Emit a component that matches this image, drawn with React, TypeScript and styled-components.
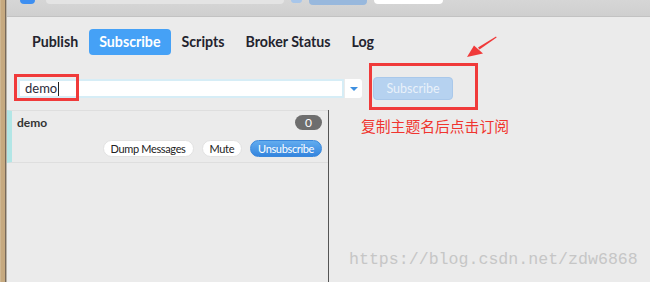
import React from 'react';
import styled, { createGlobalStyle } from 'styled-components';

const GlobalStyle = createGlobalStyle`
  html, body {
    margin: 0;
    padding: 0;
    background: #ebebeb;
  }
  * {
    box-sizing: border-box;
  }
`;

const Page = styled.div`
  position: relative;
  display: flex;
  width: 650px;
  height: 282px;
  overflow: hidden;
  background: #ebebeb;
  font-family: Lato, 'Noto Sans', sans-serif;
`;

const EdgeStrip = styled.div`
  width: 7px;
  flex-shrink: 0;
  background: linear-gradient(to right, #d8c4a2 0, #c6a97f 1px, #c6a97f 5px, #77695a 5px, #77695a 6px, #b9b2a6 6px);
`;

const Main = styled.div`
  flex: 1;
  display: flex;
  flex-direction: column;
`;

const TopBar = styled.div`
  height: 17px;
  display: flex;
  align-items: flex-start;
  background: linear-gradient(#d6d6d6, #cfcfcf);
  border-bottom: 1px solid #c2c2c2;
`;

const TopStub = styled.div<{ $left: number; $w: number; $h: number; $bg: string }>`
  margin-left: ${(p) => p.$left}px;
  width: ${(p) => p.$w}px;
  height: ${(p) => p.$h}px;
  background: ${(p) => p.$bg};
  border-radius: 0 0 4px 4px;
`;

const Tabs = styled.nav`
  display: flex;
  gap: 1px;
  padding: 12px 0 0 15px;
`;

const Tab = styled.div<{ $active?: boolean }>`
  height: 26px;
  line-height: 26px;
  padding: 0 10px;
  border-radius: 4px;
  font-size: 14.2px;
  font-weight: 700;
  color: ${(p) => (p.$active ? '#ffffff' : '#23232e')};
  background: ${(p) => (p.$active ? '#45a1f6' : 'transparent')};
`;

const TopicRow = styled.div`
  display: flex;
  align-items: center;
  height: 23px;
  margin-top: 22px;
  padding-left: 11px;
`;

const TopicInput = styled.div`
  width: 326px;
  height: 19px;
  border: 2px solid #d6edf6;
  background: #ffffff;
  padding-left: 5px;
  font-size: 13px;
  line-height: 15px;
  color: #2b2b3a;
  display: flex;
  align-items: center;
`;

const Caret = styled.span`
  display: inline-block;
  width: 1px;
  height: 14px;
  background: #222;
  margin-left: 1px;
`;

const DropButton = styled.div`
  width: 17px;
  height: 19px;
  margin-left: 1px;
  background: #ffffff;
  border-radius: 0 3px 3px 0;
  display: flex;
  align-items: center;
  justify-content: center;
`;

const Triangle = styled.div`
  width: 0;
  height: 0;
  border-left: 4px solid transparent;
  border-right: 4px solid transparent;
  border-top: 4px solid #3d8fe0;
`;

const SubscribeButton = styled.div`
  margin-left: 11px;
  width: 80px;
  height: 23px;
  border-radius: 4px;
  border: 1px solid #a9c8ea;
  background: #b6d2f0;
  color: #e9f1fa;
  font-size: 12.5px;
  line-height: 21px;
  text-align: center;
`;

const Split = styled.div`
  flex: 1;
  display: flex;
  margin-top: 10px;
`;

const TopicPanel = styled.div`
  width: 322px;
  flex-shrink: 0;
  border-right: 1px solid #555555;
`;

const TopicItem = styled.div`
  height: 53px;
  border-top: 1px solid #dedede;
  border-bottom: 1px solid #dedede;
  border-left: 5px solid #b2e6e6;
  padding: 4px 6px 0 5px;
  display: flex;
  flex-direction: column;
  gap: 10px;
`;

const ItemHeader = styled.div`
  display: flex;
  justify-content: space-between;
  align-items: center;
  height: 15px;
`;

const TopicName = styled.div`
  font-size: 12px;
  font-weight: 700;
  color: #333;
`;

const Badge = styled.div`
  width: 27px;
  height: 15px;
  border-radius: 8px;
  background: #6e6e6e;
  color: #ffffff;
  font-size: 12px;
  line-height: 15px;
  text-align: center;
`;

const ItemActions = styled.div`
  display: flex;
  justify-content: flex-end;
  gap: 8px;
`;

const PillButton = styled.div<{ $primary?: boolean }>`
  height: 17px;
  padding: 0 7px;
  border-radius: 9px;
  font-size: 11px;
  letter-spacing: -0.35px;
  line-height: 15px;
  color: ${(p) => (p.$primary ? '#ffffff' : '#222')};
  background: ${(p) => (p.$primary ? 'linear-gradient(#62acef, #3485de)' : '#ffffff')};
  border: 1px solid ${(p) => (p.$primary ? '#3a88dc' : '#e2e2e2')};
`;

const RightArea = styled.div`
  flex: 1;
  padding: 7px 0 0 32px;
`;

const Note = styled.div`
  font-family: 'Noto Sans CJK SC', sans-serif;
  font-size: 14.8px;
  line-height: 17px;
  color: #f0352f;
`;

const RedBox = styled.div<{ $x: number; $y: number; $w: number; $h: number }>`
  position: absolute;
  left: ${(p) => p.$x}px;
  top: ${(p) => p.$y}px;
  width: ${(p) => p.$w}px;
  height: ${(p) => p.$h}px;
  border: 3px solid #f03a3a;
`;

const Arrow = styled.svg`
  position: absolute;
  left: 460px;
  top: 32px;
`;

const Watermark = styled.div`
  position: absolute;
  left: 349px;
  top: 250px;
  font-family: 'Liberation Mono', monospace;
  font-size: 16.6px;
  color: #c6c6c6;
  white-space: nowrap;
`;

const App = () => {
  return (
    <Page>
      <GlobalStyle />
      <EdgeStrip />
      <Main>
        <TopBar>
          <TopStub $left={13} $w={15} $h={4} $bg="#3e8ff1" />
          <TopStub $left={11} $w={238} $h={4} $bg="#e4e4e4" />
          <TopStub $left={7} $w={11} $h={3} $bg="#a8c6ea" />
          <TopStub $left={7} $w={58} $h={5} $bg="#98b8dd" />
          <TopStub $left={7} $w={69} $h={4} $bg="#ffffff" />
        </TopBar>
        <Tabs>
          <Tab>Publish</Tab>
          <Tab $active>Subscribe</Tab>
          <Tab>Scripts</Tab>
          <Tab>Broker Status</Tab>
          <Tab>Log</Tab>
        </Tabs>
        <TopicRow>
          <TopicInput>
            demo
            <Caret />
          </TopicInput>
          <DropButton>
            <Triangle />
          </DropButton>
          <SubscribeButton>Subscribe</SubscribeButton>
        </TopicRow>
        <Split>
          <TopicPanel>
            <TopicItem>
              <ItemHeader>
                <TopicName>demo</TopicName>
                <Badge>0</Badge>
              </ItemHeader>
              <ItemActions>
                <PillButton>Dump Messages</PillButton>
                <PillButton>Mute</PillButton>
                <PillButton $primary>Unsubscribe</PillButton>
              </ItemActions>
            </TopicItem>
          </TopicPanel>
          <RightArea>
            <Note>复制主题名后点击订阅</Note>
          </RightArea>
        </Split>
      </Main>
      <RedBox $x={14} $y={74} $w={65} $h={27} />
      <RedBox $x={369} $y={63} $w={109} $h={47} />
      <Arrow width="40" height="30" viewBox="460 32 40 30">
        <polygon points="496,36.5 496.6,37.6 479.5,49.6 478,47.6" fill="#f03a3a" />
        <polygon points="467,57 474,45.5 483,53.5" fill="#f03a3a" />
      </Arrow>
      <Watermark>https://blog.csdn.net/zdw6868</Watermark>
    </Page>
  );
};

export default App;
